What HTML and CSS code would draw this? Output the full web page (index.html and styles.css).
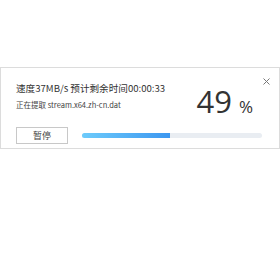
FILE: index.html
```html
<!DOCTYPE html>
<html lang="zh-CN">
<head>
    <meta charset="UTF-8">
    <title>解压进度</title>
    <link rel="stylesheet" href="styles.css">
</head>
<body>
    <div class="progress-card">
        <button class="close-btn" title="关闭">
            <svg width="7" height="7" viewBox="0 0 7 7"><path d="M0.5 0.5 L6.5 6.5 M6.5 0.5 L0.5 6.5" stroke="#777" stroke-width="1" fill="none"/></svg>
        </button>
        <div class="top-row">
            <div class="info">
                <div class="speed">速度37MB/s 预计剩余时间00:00:33</div>
                <div class="file">正在提取 stream.x64.zh-cn.dat</div>
            </div>
            <div class="percent">49<span class="sign">%</span></div>
        </div>
        <div class="bottom-row">
            <button class="pause-btn">暂停</button>
            <div class="bar"><div class="bar-fill" style="width: 49%"></div></div>
        </div>
    </div>
</body>
</html>
```

FILE: styles.css
```css
body {
    margin: 0;
    background-color: #ffffff;
    font-family: "Noto Sans CJK SC", sans-serif;
    color: #333;
}
.progress-card {
    position: relative;
    box-sizing: border-box;
    margin-top: 67px;
    width: 280px;
    height: 82px;
    border: 1px solid #dcdcdc;
    padding: 13px 17px 0 15px;
}
.close-btn {
    position: absolute;
    top: 10px;
    right: 9px;
    width: 7px;
    height: 7px;
    padding: 0;
    border: none;
    background: none;
    cursor: pointer;
    line-height: 0;
}
.top-row {
    display: flex;
    justify-content: space-between;
    align-items: flex-start;
}
.info {
    white-space: nowrap;
}
.speed {
    font-size: 9.6px;
    line-height: 14px;
    color: #333;
}
.file {
    margin-top: 4px;
    font-size: 7.5px;
    line-height: 12px;
    color: #444;
}
.percent {
    margin-top: 10px;
    margin-right: 9px;
    font-family: "Open Sans", sans-serif;
    font-size: 31px;
    line-height: 20px;
    color: #333;
    white-space: nowrap;
}
.percent .sign {
    margin-left: 7px;
    font-size: 17px;
}
.bottom-row {
    display: flex;
    align-items: center;
    margin-top: 10px;
}
.pause-btn {
    box-sizing: border-box;
    width: 52px;
    height: 17px;
    padding: 0;
    border: 1px solid #c8c8c8;
    background-color: #fff;
    font-family: "Noto Sans CJK SC", sans-serif;
    font-size: 9px;
    line-height: 15px;
    color: #444;
    cursor: pointer;
}
.bar {
    flex: 1;
    height: 5px;
    margin-left: 14px;
    border-radius: 3px;
    background-color: #e9edf2;
    overflow: hidden;
}
.bar-fill {
    height: 100%;
    background: linear-gradient(to right, #6dcbfb, #3c97f0);
}
```
